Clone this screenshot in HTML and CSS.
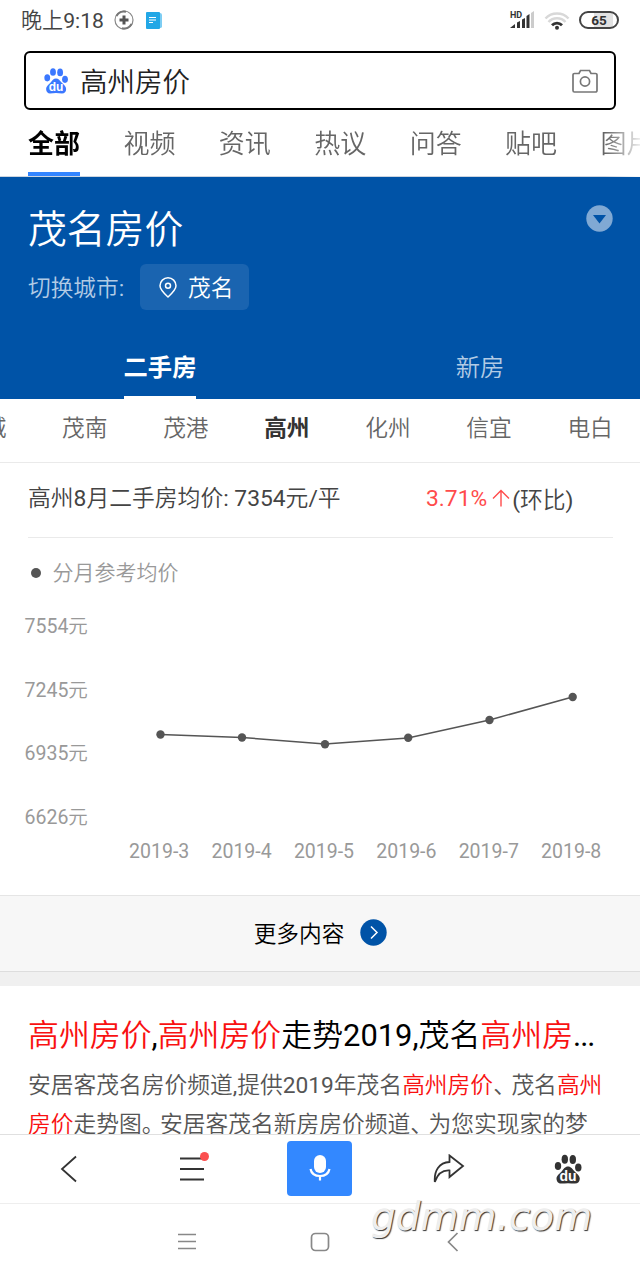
FILE: index.html
```html
<!DOCTYPE html>
<html lang="zh-CN">
<head>
  <meta charset="UTF-8" />
  <meta name="viewport" content="width=device-width, initial-scale=1.0"/>
  <title>高州房价</title>
  <link rel="stylesheet" href="styles.css">
</head>
<body>
<div class="screen">

  <!-- Status bar -->
  <div class="status">
    <span class="time">晚上9:18</span>
    <svg class="ic-plus" width="20" height="20" viewBox="0 0 20 20"><circle cx="10" cy="10" r="9" fill="none" stroke="#888" stroke-width="1.2"/><path d="M2.500 6A8.500 8.500 0 0 1 12 1.800M17.500 14A8.500 8.500 0 0 1 8 18.200" fill="none" stroke="#777" stroke-width="2"/><path d="M10 5.500v9M5.500 10h9" stroke="#555" stroke-width="3"/></svg>
    <svg class="ic-doc" width="16" height="17" viewBox="0 0 16 17"><path d="M3 1h11a2 2 0 0 1 2 2v12a2 2 0 0 1-2 1H3z" fill="#7dcdf3"/><rect width="14" height="17" rx="1" fill="#22a7e6"/><path d="M3 5.500h7M3 8h7M3 10.500h4" stroke="#fff" stroke-width="1"/></svg>
    <div class="status-right">
      <svg width="25" height="20" viewBox="0 0 25 20"><text class="hd" x="0" y="7.500">HD</text><path d="M0 18l5-4v4z M7 12.500l3-1.500v7H7z M12 9.500l3-1.500v10h-3z M16.500 6l3-2v14h-3z" fill="#333"/><path d="M21 3l3-2v17h-3z" fill="#ccc"/></svg>
      <svg class="ic-wifi" width="26" height="19" viewBox="0 0 26 19"><g fill="none" stroke-width="2.500"><path d="M1.500 7.500a16 16 0 0 1 23 0M4.500 11a11.500 11.500 0 0 1 17 0" stroke="#d8d8d8"/><path d="M8 14.200a7 7 0 0 1 10 0" stroke="#333" stroke-width="2.800"/></g><circle cx="13" cy="16.800" r="2" fill="#333"/></svg>
      <span class="battery">65</span>
    </div>
  </div>

  <!-- Search box -->
  <div class="search">
    <svg class="paw" width="24" height="26" viewBox="0 0 28 30"><g fill="#3b78ff"><ellipse cx="3.800" cy="11.300" rx="3.400" ry="4.200"/><ellipse cx="10.500" cy="4.500" rx="3.400" ry="4.500"/><ellipse cx="18.800" cy="5" rx="3.400" ry="4.500"/><ellipse cx="24.500" cy="13" rx="3.400" ry="4.200"/><path d="M14 12c-3 0-4.500 2.500-6 4.500-2 2.500-5.500 4.500-5.500 8 0 3 2 5 4.500 5 2.500 0 4.500-.5 7-.5s4.500.5 7 .5c3 0 4.800-2 4.800-5 0-3.500-3.300-5.500-5.600-8-1.700-2-3.200-4.500-6.200-4.500z"/></g><text class="du" x="14" y="27">du</text></svg>
    <span class="query">高州房价</span>
    <svg class="camera" width="26" height="24" viewBox="0 0 26 24"><path d="M2.500 4.500H7l1.500-3h9l1.500 3h4.500a1.500 1.500 0 0 1 1.500 1.500v15.500a1.500 1.500 0 0 1-1.500 1.500h-21A1.500 1.500 0 0 1 1 21.500V6a1.500 1.500 0 0 1 1.500-1.500z"/><circle cx="13" cy="12.500" r="4.600"/></svg>
  </div>

  <div class="tabs">
    <span class="active">全部</span>
    <span>视频</span>
    <span>资讯</span>
    <span>热议</span>
    <span>问答</span>
    <span>贴吧</span>
    <span>图片</span>
  </div>

  <!-- City header -->
  <div class="city">
    <div class="city-top">
      <h1>茂名房价</h1>
      <svg width="27" height="27" viewBox="0 0 27 27"><circle cx="13.500" cy="13.500" r="13.200" fill="#80a9d4"/><path d="M7 10h13l-6.500 8.500z" fill="#0053a7"/></svg>
    </div>
    <div class="switch">
      <span class="switch-label">切换城市:</span>
      <span class="place">
        <svg width="18" height="21" viewBox="0 0 18 21"><path d="M9 20C5 16.300 1 12.800 1 8.800a8 8 0 0 1 16 0c0 4-4 7.500-8 11.200z"/><circle cx="9" cy="8.800" r="2.500"/></svg>
        <span>茂名</span>
      </span>
    </div>
    <div class="types">
      <div><span class="active">二手房</span></div>
      <div><span>新房</span></div>
    </div>
  </div>

  <div class="districts">
    <span>茂城</span>
    <span>茂南</span>
    <span>茂港</span>
    <span class="active">高州</span>
    <span>化州</span>
    <span>信宜</span>
    <span>电白</span>
  </div>

  <div class="price">
    <span class="avg">高州8月二手房均价: 7354元/平</span>
    <span class="rate">3.71%</span>
    <svg width="18" height="18" viewBox="0 0 18 18"><path d="M9 17.500V1.500M1 9.500l8-8 8 8"/></svg>
    <span class="ratio">(环比)</span>
  </div>

  <div class="legend"><i></i><span>分月参考均价</span></div>

  <!-- Price chart -->
  <div class="chart">
    <div class="y-axis">
      <span>7554元</span>
      <span>7245元</span>
      <span>6935元</span>
      <span>6626元</span>
    </div>
    <svg class="plot" width="496" height="218" viewBox="118 608 496 218">
      <polyline points="160.500,734.500 242,737.500 325,744 408,738 489.500,720 572.500,697"/>
      <circle cx="160.500" cy="734.500" r="4.200"/>
      <circle cx="242" cy="737.500" r="4.200"/>
      <circle cx="325" cy="744.200" r="4.200"/>
      <circle cx="408.200" cy="737.800" r="4.200"/>
      <circle cx="489.500" cy="720" r="4.200"/>
      <circle cx="572.700" cy="697" r="4.200"/>
    </svg>
    <div class="x-axis">
      <span>2019-3</span>
      <span>2019-4</span>
      <span>2019-5</span>
      <span>2019-6</span>
      <span>2019-7</span>
      <span>2019-8</span>
    </div>
  </div>

  <div class="more">
    <span>更多内容</span>
    <svg width="27" height="27" viewBox="0 0 27 27"><circle cx="13.500" cy="13.500" r="13.200" fill="#0053a7"/><path d="M11 7.500l6 6-6 6" fill="none" stroke="#fff" stroke-width="1.500"/></svg>
  </div>
  <div class="divider"></div>

  <!-- Search result -->
  <div class="result">
    <h2><em>高州房价</em>,<em>高州房价</em>走势2019,茂名<em>高州房</em><span class="dots">...</span></h2>
    <p>安居客茂名房价频道,提供2019年茂名<em>高州房价</em><span class="punct">、</span>茂名<em>高州</em></p>
    <p><em>房价</em>走势图<span class="punct">。</span>安居客茂名新房房价频道<span class="punct">、</span>为您实现家的梦</p>
  </div>

  <!-- Browser toolbar -->
  <div class="toolbar">
    <div><svg width="18" height="28" viewBox="0 0 18 28"><path class="line" d="M16 1.500L2 14l14 12.500"/></svg></div>
    <div><span class="menu"><svg width="26" height="26" viewBox="0 0 26 26"><path class="line" d="M1 2.500h24M1 13h24M1 23.500h24"/></svg><b class="dot"></b></span></div>
    <div><span class="mic"><svg width="24" height="28" viewBox="0 0 24 28"><rect x="6" y="1" width="12" height="18" rx="6" fill="#fff"/><path d="M2.500 15c1 5 4.500 7 9.500 7s8.500-2 9.500-7M12 22v4.500" fill="none" stroke="#fff" stroke-width="2.200"/></svg></span></div>
    <div><svg width="32" height="30" viewBox="0 0 32 30"><path class="line" d="M16.500 1.500L30 12 16.500 23v-6.500C9 16 4.500 20 1.800 28 1 17 6 8.500 16.500 8z"/></svg></div>
    <div><svg width="28" height="30" viewBox="0 0 28 30"><g fill="#333"><ellipse cx="4" cy="12" rx="3.200" ry="4"/><ellipse cx="10.800" cy="5.200" rx="3.200" ry="4.500"/><ellipse cx="18.800" cy="5.500" rx="3.200" ry="4.500"/><ellipse cx="24.300" cy="13.500" rx="3.200" ry="4"/><path d="M14 12.500c-3 0-4.500 2.500-6 4.500-2 2.500-5.500 4.500-5.500 7.500 0 3 2 5 4.500 5 2.500 0 4.500-.3 7-.3s4.500.3 7 .3c3 0 4.800-2 4.800-5 0-3-3.300-5-5.600-7.500-1.700-2-3.200-4.500-6.200-4.500z"/></g><text class="du" x="14" y="27">du</text></svg></div>
  </div>

  <!-- System navigation -->
  <div class="sysnav">
    <svg width="20" height="20" viewBox="0 0 20 20"><path d="M1 2.500h18M1 9.500h18M1 16.500h18"/></svg>
    <svg width="20" height="20" viewBox="0 0 20 20"><rect x="1.500" y="1.500" width="17" height="17" rx="4"/></svg>
    <svg width="20" height="20" viewBox="0 0 20 20"><path d="M14.500 1L5.500 10l9 9"/></svg>
  </div>

  <div class="watermark">gdmm.com</div>
</div>
</body>
</html>
```
FILE: styles.css
```css
* {
  box-sizing: border-box;
}

body {
  margin: 0;
  background: #fff;
  color: #555;
  font-family: Roboto, "Noto Sans CJK SC DemiLight", "Noto Sans CJK SC", sans-serif;
  font-weight: 400;
}

.screen {
  position: relative;
  width: 640px;
  height: 1280px;
  overflow: hidden;
  display: flex;
  flex-direction: column;
  white-space: nowrap;
}

.screen > div {
  flex-shrink: 0;
}

svg {
  display: block;
  flex-shrink: 0;
}

em {
  font-style: normal;
  color: #f91111;
}

/* Status bar */
.status {
  display: flex;
  align-items: center;
  height: 40px;
  padding: 0 21px;
}

.time {
  width: 93px;
  margin-top: -2px;
  font-size: 21.100px;
  color: #444;
}

.ic-doc {
  margin-left: 12px;
}

.status-right {
  display: flex;
  align-items: center;
  margin-left: auto;
}

.status-right svg {
  overflow: visible;
}

.hd {
  font: bold 9px Roboto, sans-serif;
  fill: #333;
}

.ic-wifi {
  margin: 0 9px;
}

.battery {
  width: 40px;
  height: 18px;
  border: 2px solid #444;
  border-radius: 9px;
  background: linear-gradient(to right, #fff 35%, #e2e2e2 35%, #e2e2e2 88%, #fff 88%);
  font-size: 13.500px;
  font-weight: 700;
  line-height: 14px;
  text-align: center;
  color: #333;
}

/* Search */
.search {
  display: flex;
  align-items: center;
  height: 59px;
  margin: 11px 24px 0;
  padding: 0 16px 0 18px;
  border: 2px solid #000;
  border-radius: 6px;
}

.query {
  margin: -1px 0 0 12px;
  font-size: 27.500px;
  color: #222;
}

.camera {
  margin-left: auto;
  fill: none;
  stroke: #777;
  stroke-width: 1.7;
}

.du {
  font: bold 14px "Liberation Sans", sans-serif;
  fill: #fff;
  text-anchor: middle;
}

.tabs {
  display: flex;
  gap: 43.400px;
  height: 67px;
  padding-left: 28px;
  border-bottom: 1px solid #ccd5e0;
  font-size: 26px;
  line-height: 68px;
  color: #666;
  -webkit-mask-image: linear-gradient(to right, #000 605px, transparent 645px);
  mask-image: linear-gradient(to right, #000 605px, transparent 645px);
}

.tabs .active {
  border-bottom: 4px solid #3385ff;
  color: #000;
}

.active {
  font-family: Roboto, "Noto Sans CJK SC", sans-serif;
  font-weight: 700;
}

/* City header */
.city {
  height: 222px;
  background: #0053a7;
  color: #fff;
}

.city-top {
  display: flex;
  justify-content: space-between;
  height: 87px;
  padding: 28px 27px 0 28px;
}

h1 {
  margin: 0;
  font-size: 38.800px;
  font-weight: 400;
  line-height: 50px;
}

.switch {
  display: flex;
  align-items: center;
  height: 46px;
  padding-left: 28px;
  font-size: 22.700px;
  line-height: 49px;
}

.switch-label {
  width: 112px;
  height: 46px;
  color: #b2cbe5;
}

.place {
  display: flex;
  align-items: center;
  gap: 11px;
  height: 46px;
  padding: 0 16px 0 19px;
  border-radius: 6px;
  background: #1a64b0;
}

.place span {
  height: 46px;
}

.place svg {
  fill: none;
  stroke: #fff;
  stroke-width: 1.5;
}

.types {
  display: flex;
  height: 89px;
  padding-top: 23px;
  font-size: 24.300px;
  line-height: 69px;
}

.types div {
  display: flex;
  justify-content: center;
  width: 50%;
}

.types span {
  height: 66px;
  color: #b2cbe5;
}

.types .active {
  border-bottom: 3px solid #fff;
  color: #fff;
}

.districts {
  display: flex;
  gap: 55.700px;
  height: 64px;
  margin-left: -39px;
  border-bottom: 1px solid #eaeaea;
  font-size: 22.700px;
  line-height: 60px;
  color: #666;
}

.districts .active {
  color: #333;
}

/* Average price */
.price {
  display: flex;
  align-items: center;
  height: 75px;
  margin: 0 27px 0 28px;
  padding-bottom: 4px;
  border-bottom: 1px solid #eaeaea;
  font-size: 22.800px;
  color: #444;
}

.avg {
  width: 398px;
  margin-top: -4px;
}

.rate {
  margin-right: 5px;
  color: #ff4b4b;
}

.ratio {
  margin-left: 2px;
}

.price svg {
  fill: none;
  stroke: #ff4b4b;
  stroke-width: 1.4;
}

.legend {
  display: flex;
  align-items: center;
  height: 70px;
  padding-left: 31px;
  font-size: 21px;
  color: #999;
}

.legend span {
  margin-top: -5px;
}

.legend i {
  width: 10px;
  height: 10px;
  margin-right: 11.500px;
  border-radius: 50%;
  background: #555;
}

/* Chart */
.chart {
  display: grid;
  grid-template: 218px 69px / 93.500px 496px;
  height: 287px;
  padding-left: 24.500px;
  font-size: 19.500px;
  color: #999;
}

.y-axis {
  display: flex;
  flex-direction: column;
  justify-content: space-between;
  padding: 4px 0 3px;
}

.y-axis span {
  height: 20px;
  line-height: 29px;
}

.plot {
  fill: #555;
}

.plot polyline {
  fill: none;
  stroke: #555;
  stroke-width: 1.5;
}

.x-axis {
  grid-column: 2;
  display: flex;
  line-height: 51px;
}

.x-axis span {
  width: 82.400px;
  text-align: center;
}

.more {
  display: flex;
  justify-content: center;
  align-items: center;
  gap: 16px;
  height: 77px;
  padding: 0 0 2px 1px;
  border-top: 1px solid #e5e5e5;
  border-bottom: 1px solid #ddd;
  background: #f7f7f7;
  font-size: 22.700px;
  color: #000;
}

.divider {
  height: 14px;
  background: #f0f0f0;
}

/* Search result */
.result {
  height: 148px;
  padding: 25px 0 0 28px;
  overflow: hidden;
}

h2 {
  margin: 0 0 6px;
  font-size: 30.900px;
  font-weight: 400;
  line-height: 49px;
  color: #000;
}

.dots {
  letter-spacing: -1px;
}

.result p {
  margin: 0;
  font-size: 22.750px;
  line-height: 39px;
  color: #555;
}

.punct {
  letter-spacing: -4.500px;
}

/* Bottom bars */
.toolbar {
  display: grid;
  grid-template-columns: 138px 108px 147px 112px 125px;
  height: 69px;
  border-top: 1px solid #e0e0e0;
  background: #fff;
}

.toolbar div {
  display: flex;
  justify-content: center;
  align-items: center;
}

.line {
  fill: none;
  stroke: #333;
  stroke-width: 1.8;
}

.menu {
  position: relative;
}

.dot {
  position: absolute;
  top: -4px;
  right: -8px;
  width: 9px;
  height: 9px;
  margin-right: 4px;
  border-radius: 50%;
  background: #fb4f4f;
}

.mic {
  display: flex;
  justify-content: center;
  align-items: center;
  width: 65px;
  height: 55px;
  margin-bottom: 2px;
  border-radius: 4px;
  background: #3388ff;
}

.sysnav {
  display: flex;
  justify-content: center;
  gap: 113px;
  height: 77px;
  padding-top: 28px;
  border-top: 1px solid #eee;
}

.sysnav svg {
  fill: none;
  stroke: #888;
  stroke-width: 1.7;
}

.watermark {
  position: absolute;
  left: 371px;
  top: 1192px;
  font: italic 39px/50px "DejaVu Sans", sans-serif;
  color: #eee;
  text-shadow: 1px 1px 1px #333;
}
```
